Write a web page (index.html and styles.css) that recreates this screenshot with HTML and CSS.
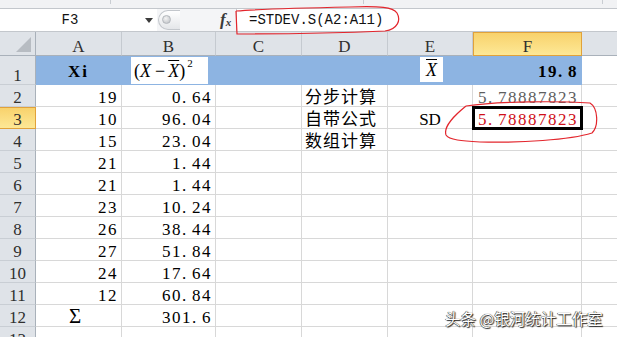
FILE: index.html
```html
<!DOCTYPE html>
<html>
<head>
<meta charset="utf-8">
<link rel="stylesheet" href="styles.css">
</head>
<body>
<div class="app">
  <div class="ribbon-edge"><span class="seg s1"></span><span class="seg s2"></span><span class="seg s3"></span></div>
  <div class="fbar">
    <div class="namebox">
      <span class="name">F3</span>
      <svg class="drop" width="8" height="5" viewBox="0 0 8 5"><path d="M0 0H8L4 5Z" fill="#3c3c3c"/></svg>
    </div>
    <div class="grip"><span class="knob"></span></div>
    <div class="fx"><i>f</i><span class="fx-x">x</span></div>
    <div class="formula">=STDEV.S(A2:A11)</div>
  </div>

  <div class="sheet">
    <div class="corner"><svg width="36" height="23" viewBox="0 0 36 23"><path d="M31 5V20H16Z" fill="#b7bcc2"/></svg></div>
    <div class="ch">A</div><div class="ch">B</div><div class="ch">C</div><div class="ch">D</div><div class="ch">E</div><div class="ch hl">F</div><div class="ch"></div>

    <div class="rh">1</div>
    <div class="c blue ctr mid xi">Xi</div>
    <div class="c blue"><div class="eq"><span class="up">(</span><i>X</i><span class="minus">−</span><i class="ol">X</i><span class="up">)</span><sup>2</sup></div></div>
    <div class="c blue"></div>
    <div class="c blue"></div>
    <div class="c blue"><div class="eqbox"><i class="ol">X</i></div></div>
    <div class="c blue num mid strong">19<span class="p">.</span>8</div>
    <div class="c"></div>

    <div class="rh">2</div>
    <div class="c num">19</div><div class="c num">0<span class="p">.</span>64</div><div class="c"></div>
    <div class="c cjk">分步计算</div><div class="c"></div><div class="c num grey">5<span class="p">.</span>78887823</div><div class="c"></div>

    <div class="rh hl">3</div>
    <div class="c num">10</div><div class="c num">96<span class="p">.</span>04</div><div class="c"></div>
    <div class="c cjk">自带公式</div><div class="c ctr">SD</div><div class="c num red sel">5<span class="p">.</span>78887823</div><div class="c"></div>

    <div class="rh">4</div>
    <div class="c num">15</div><div class="c num">23<span class="p">.</span>04</div><div class="c"></div>
    <div class="c cjk">数组计算</div><div class="c"></div><div class="c"></div><div class="c"></div>

    <div class="rh">5</div>
    <div class="c num">21</div><div class="c num">1<span class="p">.</span>44</div><div class="c"></div><div class="c"></div><div class="c"></div><div class="c"></div><div class="c"></div>

    <div class="rh">6</div>
    <div class="c num">21</div><div class="c num">1<span class="p">.</span>44</div><div class="c"></div><div class="c"></div><div class="c"></div><div class="c"></div><div class="c"></div>

    <div class="rh">7</div>
    <div class="c num">23</div><div class="c num">10<span class="p">.</span>24</div><div class="c"></div><div class="c"></div><div class="c"></div><div class="c"></div><div class="c"></div>

    <div class="rh">8</div>
    <div class="c num">26</div><div class="c num">38<span class="p">.</span>44</div><div class="c"></div><div class="c"></div><div class="c"></div><div class="c"></div><div class="c"></div>

    <div class="rh">9</div>
    <div class="c num">27</div><div class="c num">51<span class="p">.</span>84</div><div class="c"></div><div class="c"></div><div class="c"></div><div class="c"></div><div class="c"></div>

    <div class="rh">10</div>
    <div class="c num">24</div><div class="c num">17<span class="p">.</span>64</div><div class="c"></div><div class="c"></div><div class="c"></div><div class="c"></div><div class="c"></div>

    <div class="rh">11</div>
    <div class="c num">12</div><div class="c num">60<span class="p">.</span>84</div><div class="c"></div><div class="c"></div><div class="c"></div><div class="c"></div><div class="c"></div>

    <div class="rh">12</div>
    <div class="c ctr sigma">Σ</div><div class="c num">301<span class="p">.</span>6</div><div class="c"></div><div class="c"></div><div class="c"></div><div class="c"></div><div class="c"></div>

    <div class="rh">13</div>
    <div class="c"></div><div class="c"></div><div class="c"></div><div class="c"></div><div class="c"></div><div class="c"></div><div class="c"></div>
  </div>

  <svg class="marks" width="617" height="337" viewBox="0 0 617 337">
    <path d="M236 11 L237 34 C270 34 340 33 385 31 C398 29 401 20 397 13 C393 7 380 6 350 7 C300 8 262 9 236 11" />
    <path d="M466 106 C500 101 560 101 590 103 C598 108 599 126 592 133 C570 140 520 143 480 142 C462 141 449 140 446 135 C443 126 455 115 466 106" />
  </svg>
  <div class="watermark">头条 @银河统计工作室</div>
</div>
</body>
</html>
```
FILE: styles.css
```css
* { box-sizing: border-box; }
html, body { margin: 0; padding: 0; }
body {
  width: 617px;
  height: 337px;
  overflow: hidden;
  background: #fff;
  font-family: "Liberation Serif", serif;
  color: #000;
}
.app { position: relative; width: 617px; height: 337px; overflow: hidden; }

/* top strip */
.ribbon-edge {
  height: 9px;
  background: #f1f2f4;
  border-bottom: 1px solid #c3c7cc;
  display: flex;
}
.seg { height: 4px; border-right: 1px solid #c9cdd2; flex: none; }
.s1 { width: 111px; }
.s2 { width: 253px; }
.s3 { width: 239px; }

/* formula bar */
.fbar {
  display: flex;
  height: 23px;
  background: #f4f5f7;
  border-bottom: 1px solid #c3c7cc;
}
.namebox {
  width: 157px;
  background: #fff;
  display: flex;
  align-items: center;
  flex: none;
}
.name {
  width: 140px;
  text-align: center;
  font: 14px "Liberation Mono", monospace;
  color: #111;
}
.drop { margin-left: 5px; margin-top: 1px; }
.grip {
  position: relative;
  width: 22px;
  height: 20px;
  align-self: center;
  margin-left: 1px;
  border: 1px solid #c3c7cc;
  border-right: none;
  border-radius: 10px 0 0 10px;
  background: linear-gradient(#ffffff, #e4e6e9);
  flex: none;
}
.knob {
  position: absolute;
  left: 3px;
  top: 4px;
  width: 9px;
  height: 9px;
  border-radius: 50%;
  background: radial-gradient(circle at 40% 35%, #f4f4f4, #b9bdc2);
  border: 1px solid #b3b7bc;
}
.fx {
  margin-left: 40px;
  width: 16px;
  flex: none;
  display: flex;
  align-items: center;
  font-family: "Liberation Serif", serif;
  color: #3a3a3a;
}
.fx i { font-weight: bold; font-size: 17px; }
.fx-x { font-size: 11px; font-style: italic; font-weight: bold; margin-top: 4px; }
.formula {
  flex: 1;
  background: #fff;
  border-left: 1px solid #c9cdd2;
  padding-left: 12px;
  font: 14px "Liberation Mono", monospace;
  line-height: 22px;
  color: #111;
}

/* sheet */
.sheet {
  display: grid;
  grid-template-columns: 36px 86px 94px 86px 86px 85px 109px 86px;
  grid-template-rows: 24px 29px repeat(12, 22px);
  width: 668px;
}
.corner {
  background: #dfe3e8;
  border-right: 1px solid #a9b1ba;
  border-bottom: 1px solid #a9b1ba;
}
.corner svg { display: block; }
.ch, .rh {
  display: flex;
  align-items: flex-end;
  justify-content: center;
  font-size: 17px;
  line-height: 16px;
  color: #2f2f2f;
  background: #dfe3e8;
}
.ch {
  border-right: 1px solid #c5cad0;
  border-bottom: 1px solid #a9b1ba;
}
.rh {
  border-right: 1px solid #a9b1ba;
  border-bottom: 1px solid #c9ced4;
}
.ch.hl, .rh.hl {
  background: linear-gradient(#f8d26c, #fde896);
  border: 1px solid #e1a23a;
}
.rh.hl { border-left: none; }

.c {
  display: flex;
  align-items: flex-end;
  font-size: 17px;
  line-height: 16px;
  padding: 0 3px;
  border-right: 1px solid #d8d8d8;
  border-bottom: 1px solid #d8d8d8;
  white-space: nowrap;
}
.num { justify-content: flex-end; letter-spacing: 1.5px; }
.p { margin-right: 4.25px; }
.ctr { justify-content: center; }
.mid { padding-bottom: 4px; }
.strong { font-weight: bold; }
.xi { font-weight: bold; letter-spacing: 2px; }
.grey { color: #5e5e5e; }
.red { color: #d0101a; }
.sel {
  position: relative;
  z-index: 2;
  outline: 3px solid #000;
  outline-offset: -2px;
}
.cjk {
  font-family: "Noto Sans CJK SC", sans-serif;
  letter-spacing: 1px;
  line-height: 21px;
  padding-bottom: 0;
}
.sigma { font-size: 21px; padding-bottom: 2px; padding-right: 10px; }

.blue {
  background: #8db4e2;
  border-color: #8db4e2;
  align-items: flex-start;
}
.blue.num, .blue.ctr { align-items: flex-end; }

.eq {
  margin: 1px 0 0 6px;
  width: 77px;
  height: 27px;
  padding: 2px 0 0 3px;
  background: #fff;
  font-size: 18px;
  line-height: 25px;
  white-space: nowrap;
  letter-spacing: 0;
}
.eq i { font-style: italic; }
.minus { margin: 0 3px 0 4px; }
.up { font-style: normal; }
.eq sup { font-size: 11px; vertical-align: 0; position: relative; top: -10px; margin-left: 2px; }
.ol { text-decoration: overline; text-decoration-thickness: 1px; }
.eqbox {
  margin: 1px 0 0 29px;
  width: 23px;
  height: 25px;
  padding-top: 2px;
  background: #fff;
  font-size: 18px;
  line-height: 23px;
  text-align: center;
}

/* annotations over the sheet */
.marks {
  position: absolute;
  left: 0;
  top: 0;
  pointer-events: none;
  fill: none;
  stroke: #e3262d;
  stroke-width: 1.2;
}
.watermark {
  position: absolute;
  left: 445px;
  top: 309px;
  font-family: "Noto Sans CJK SC", sans-serif;
  font-size: 15.5px;
  line-height: 18px;
  color: #fff;
  text-shadow: 1px 1px 1px #222, -0.5px -0.5px 0.5px #444, 0 0 1px #222;
  white-space: nowrap;
}
```
